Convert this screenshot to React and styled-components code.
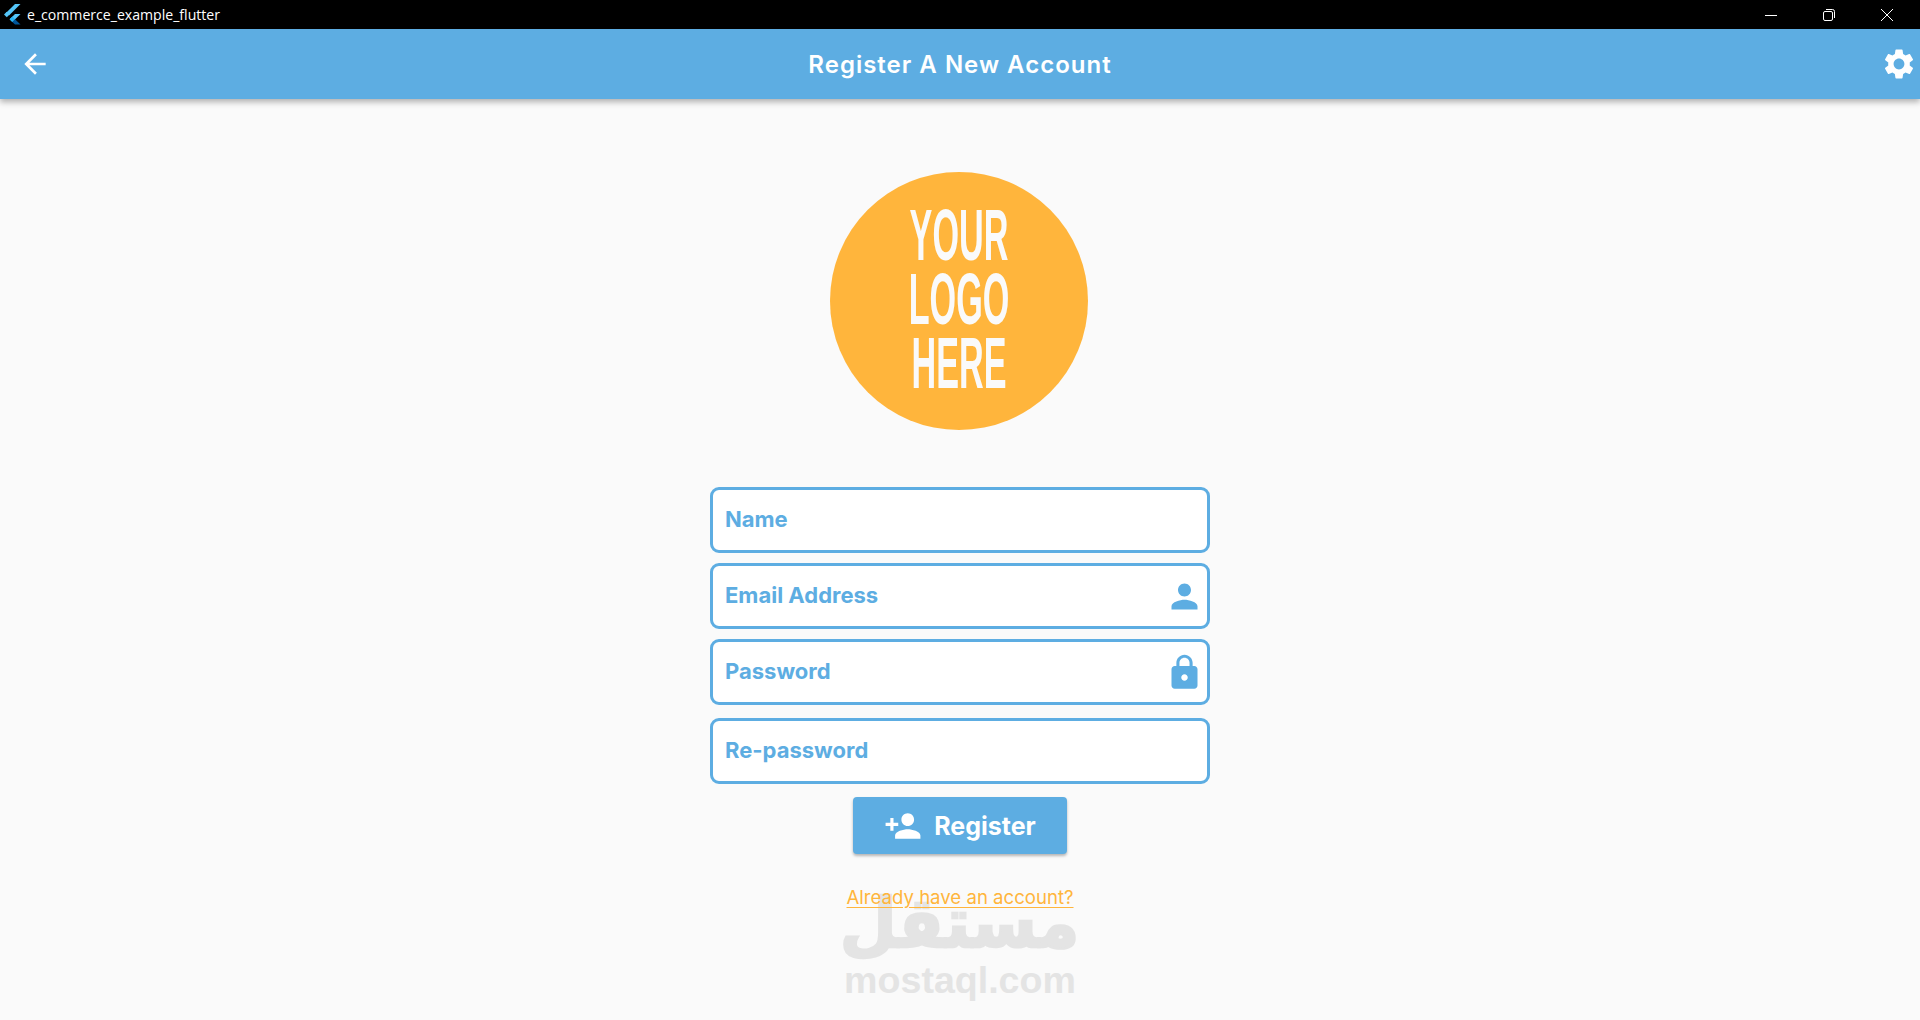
import React from 'react';
import styled, { createGlobalStyle } from 'styled-components';
import { MdArrowBack, MdSettings, MdPerson, MdLock, MdPersonAdd } from 'react-icons/md';

const BLUE = '#5dade2';
const ORANGE = '#ffb53c';
const MARK = '#e4e4e4';

const GlobalStyle = createGlobalStyle`
  html, body {
    margin: 0;
    padding: 0;
    height: 100%;
    background: #fafafa;
    overflow: hidden;
  }
`;

const Page = styled.div`
  position: relative;
  height: 1020px;
  display: flex;
  flex-direction: column;
  font-family: 'Inter', 'Liberation Sans', sans-serif;
  background: #fafafa;
`;

const TitleBar = styled.div`
  height: 29px;
  flex: none;
  background: #000;
  color: #fff;
  display: flex;
  align-items: center;
  padding: 0 4px 0 4px;
  font-family: 'Open Sans', 'Liberation Sans', sans-serif;
  font-size: 14.1px;
`;

const AppName = styled.span`
  margin-left: 6px;
  flex: 1;
`;

const WinButton = styled.div`
  width: 58px;
  display: flex;
  justify-content: center;
  align-items: center;
`;

const AppBar = styled.header`
  height: 70px;
  flex: none;
  background: ${BLUE};
  color: #fff;
  display: grid;
  grid-template-columns: 1fr auto 1fr;
  align-items: center;
  padding: 0 3px 0 19px;
  box-shadow: 0 3px 6px rgba(0, 0, 0, 0.3);
  position: relative;
`;

const AppTitle = styled.h1`
  margin: 0 0 0 -16px;
  font-size: 24px;
  font-weight: 600;
  letter-spacing: 1px;
`;

const SettingsIcon = styled(MdSettings)`
  justify-self: end;
`;

const Main = styled.main`
  flex: 1;
  display: flex;
  flex-direction: column;
  align-items: center;
  padding-top: 73px;
`;

const Logo = styled.div`
  box-sizing: border-box;
  width: 258px;
  height: 258px;
  border-radius: 50%;
  background: ${ORANGE};
  color: #fafafa;
  display: flex;
  flex-direction: column;
  align-items: center;
  justify-content: center;
  margin: 0 2px 57px 0;
  padding-bottom: 5px;
  font-family: 'Liberation Sans', sans-serif;
  font-weight: 700;
  font-size: 72px;
  line-height: 64px;
`;

const LogoLine = styled.span`
  display: block;
  transform: scaleX(0.475);
`;

const Form = styled.form`
  width: 500px;
  display: flex;
  flex-direction: column;
  align-items: center;
`;

const Field = styled.div`
  box-sizing: border-box;
  width: 100%;
  height: 66px;
  margin-bottom: ${(p) => p.$gap}px;
  background: #fff;
  border: 3px solid ${BLUE};
  border-radius: 9px;
  display: flex;
  align-items: center;
  padding: 0 3px 0 12px;
  color: ${BLUE};
`;

const Input = styled.input`
  flex: 1;
  min-width: 0;
  border: 0;
  outline: 0;
  background: transparent;
  padding: 0 0 2px;
  font-family: inherit;
  font-size: 22px;
  font-weight: 700;
  color: ${BLUE};
  &::placeholder {
    color: ${BLUE};
    opacity: 1;
  }
`;

const RegisterButton = styled.button`
  width: 214px;
  height: 57px;
  border: 0;
  border-radius: 4px;
  background: ${BLUE};
  color: #fff;
  font-family: inherit;
  font-size: 25px;
  font-weight: 700;
  display: flex;
  align-items: center;
  justify-content: center;
  gap: 12px;
  box-shadow: 0 2px 3px rgba(0, 0, 0, 0.28);
`;

const LoginLink = styled.a`
  position: relative;
  z-index: 1;
  margin-top: 32px;
  color: ${ORANGE};
  font-size: 18.6px;
  line-height: 22px;
  text-decoration: underline;
  text-underline-offset: 3px;
`;

const Watermark = styled.div`
  position: absolute;
  left: 0;
  right: 0;
  top: 884px;
  display: flex;
  flex-direction: column;
  align-items: center;
  color: ${MARK};
  pointer-events: none;
  font-family: 'Liberation Sans', sans-serif;
  font-weight: 700;
`;

const WatermarkArabic = styled.div`
  font-family: 'DejaVu Sans', sans-serif;
  font-size: 84px;
  line-height: 78px;
  direction: rtl;
  transform: scale(0.78, 0.82);
  -webkit-text-stroke: 3px ${MARK};
`;

const WatermarkLatin = styled.div`
  font-size: 37.6px;
  line-height: 36px;
`;

function FlutterLogo() {
  return (
    <svg width="17" height="21" viewBox="0 0 17 21">
      <path d="M11 0h5.5L5 11.5 2.2 8.7z" fill="#54c5f8" />
      <path d="M0 10.5l2.7-2.7L5.5 10.6 2.8 13.3z" fill="#54c5f8" />
      <path d="M16.5 10h-5.5L5.6 15.3l2.8 2.8z" fill="#54c5f8" />
      <path d="M5.6 15.3l2.8-2.7 2.6 2.6-2.7 2.8z" fill="#29b6f6" />
      <path d="M8.3 18l2.7-2.8 5.5 5.3H11z" fill="#01579b" />
    </svg>
  );
}

function App() {
  return (
    <Page>
      <GlobalStyle />
      <TitleBar>
        <FlutterLogo />
        <AppName>e_commerce_example_flutter</AppName>
        <WinButton>
          <svg width="12" height="12" viewBox="0 0 12 12"><path d="M0 6.5h12" stroke="#fff" /></svg>
        </WinButton>
        <WinButton>
          <svg width="12" height="12" viewBox="0 0 12 12" fill="none" stroke="#fff">
            <rect x="0.5" y="2.5" width="9" height="9" rx="1.5" />
            <path d="M3 0.5h6.5a2 2 0 0 1 2 2V9" />
          </svg>
        </WinButton>
        <WinButton>
          <svg width="12" height="12" viewBox="0 0 12 12"><path d="M0 0l12 12M12 0L0 12" stroke="#fff" /></svg>
        </WinButton>
      </TitleBar>
      <AppBar>
        <MdArrowBack size={32} />
        <AppTitle>Register A New Account</AppTitle>
        <SettingsIcon size={36} />
      </AppBar>
      <Main>
        <Logo>
          <LogoLine>YOUR</LogoLine>
          <LogoLine>LOGO</LogoLine>
          <LogoLine>HERE</LogoLine>
        </Logo>
        <Form>
          <Field $gap={10}><Input placeholder="Name" /></Field>
          <Field $gap={10}><Input placeholder="Email Address" /><MdPerson size={39} /></Field>
          <Field $gap={13}><Input placeholder="Password" /><MdLock size={39} /></Field>
          <Field $gap={13}><Input placeholder="Re-password" /></Field>
          <RegisterButton type="button"><MdPersonAdd size={38} />Register</RegisterButton>
          <LoginLink>Already have an account?</LoginLink>
        </Form>
      </Main>
      <Watermark>
        <WatermarkArabic>مستقل</WatermarkArabic>
        <WatermarkLatin>mostaql.com</WatermarkLatin>
      </Watermark>
    </Page>
  );
}

export default App;
